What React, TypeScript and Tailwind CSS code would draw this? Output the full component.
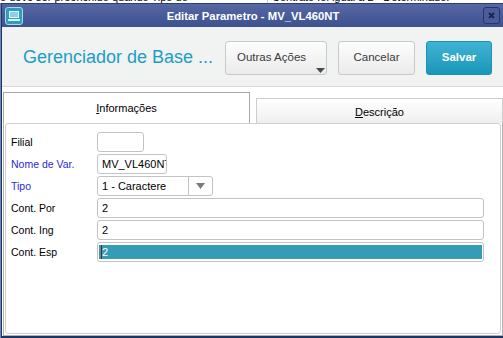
import React from "react";

function Row({ label, color, children }: { label: string; color?: string; children: React.ReactNode }) {
  return (
    <div className="flex items-center h-[20px]">
      <div className={`w-[86px] text-[10.5px] leading-[12px] ${color ?? "text-black"}`}>{label}</div>
      {children}
    </div>
  );
}

export default function App() {
  return (
    <div className="w-[503px] h-[338px] overflow-hidden bg-white flex flex-col font-['Liberation_Sans',Arial,sans-serif]">
      <div className="h-[3px] overflow-hidden flex text-[11px] leading-[11px] text-black shrink-0">
        <div className="-mt-[8px] w-[268px] whitespace-nowrap border-r border-[#c8c8c8]">o deve ser preenchido quando Tipo do</div>
        <div className="-mt-[8px] pl-[4px] whitespace-nowrap">Contrato foi igual a 2 - Determinado.</div>
      </div>
      <div className="flex-1 flex">
        <div className="w-[1px] bg-[#6b86b8]" />
        <div className="flex-1 flex flex-col border-l border-b-2 border-[#1c3564]">
          <div className="h-[24px] shrink-0 flex items-center bg-gradient-to-b from-[#5568a3] to-[#3e5190] border-t border-[#2c3e6e]">
            <div className="ml-[3px] w-[18px] h-[18px]">
              <svg width="18" height="18" viewBox="0 0 18 18">
                <rect x="0.5" y="0.5" width="17" height="17" rx="2.5" fill="#2f9dc0" stroke="#a9d8e6" />
                <rect x="4" y="4" width="10" height="7" fill="#e6f5fa" />
                <rect x="5" y="5" width="8" height="5" fill="#8fd0e4" />
                <rect x="3" y="12" width="12" height="2" fill="#e6f5fa" />
              </svg>
            </div>
            <div className="flex-1 text-center text-white font-bold text-[11.3px] leading-[14px]">Editar Parametro - MV_VL460NT</div>
            <div className="mr-[3px] w-[17px] h-[17px] rounded-[3px] border border-[#26366a] bg-[#4a5d9a] flex items-center justify-center">
              <svg width="7" height="7" viewBox="0 0 7 7">
                <path d="M1 1 L6 6 M6 1 L1 6" stroke="#1b2347" strokeWidth="1.8" />
              </svg>
            </div>
          </div>

          <div className="h-[60px] shrink-0 flex items-center bg-[#f1f2f2] border-b border-[#d8d8d8] pl-[21px] pr-[11px]">
            <div className="text-[18px] leading-[22px] text-[#1b9ec6] mt-[1px]">Gerenciador de Base ...</div>
            <div className="ml-auto flex gap-[11px] mt-[3px]">
              <div className="relative w-[102px] h-[34px] rounded-[3px] border border-[#c9c9c9] bg-gradient-to-b from-[#fdfdfd] to-[#ebebeb] flex items-center pl-[11px] text-[11.5px] text-[#3a3a3a]">
                Outras Ações
                <svg className="absolute left-[90px] top-[26px]" width="9" height="5" viewBox="0 0 9 5">
                  <path d="M0 0 L9 0 L4.5 5 Z" fill="#4a4a4a" />
                </svg>
              </div>
              <div className="w-[77px] h-[34px] rounded-[3px] border border-[#c9c9c9] bg-gradient-to-b from-[#fdfdfd] to-[#ebebeb] flex items-center justify-center text-[11.5px] text-[#3a3a3a]">
                Cancelar
              </div>
              <div className="w-[66px] h-[34px] rounded-[3px] border border-[#1b93b4] bg-gradient-to-b from-[#3fb3d2] to-[#1697ba] flex items-center justify-center text-[11.5px] font-bold text-white">
                Salvar
              </div>
            </div>
          </div>

          <div className="h-[5px] shrink-0" />

          <div className="h-[31px] shrink-0 flex items-end ml-[1px] w-[500px] gap-[6px]">
            <div className="w-[247px] h-[31px] border-t border-l border-r border-[#a8a8a8] bg-white flex items-center justify-center text-[11px] text-black">
              <span><span className="underline">I</span>nformações</span>
            </div>
            <div className="w-[247px] h-[25px] border-t border-l border-r border-[#cdcdcd] bg-gradient-to-b from-[#ffffff] to-[#efefef] flex items-center justify-center text-[11px] text-black pt-[2px]">
              <span><span className="underline">D</span>escrição</span>
            </div>
          </div>

          <div className="flex-1 ml-[1px] w-[500px] border-l border-r border-b border-[#b3b3b3] px-[1px] pb-[1px] flex">
            <div className="flex-1 border border-[#cfcfcf] rounded-[3px] pt-[8px] pl-[5px] flex flex-col gap-[2px]">
              <Row label="Filial">
                <div className="w-[47px] h-[20px] border border-[#c3c3c3] rounded-[3px] bg-white" />
              </Row>
              <Row label="Nome de Var." color="text-[#2a2ad8]">
                <div className="w-[70px] h-[20px] border border-[#c3c3c3] rounded-[3px] bg-white overflow-hidden whitespace-nowrap pl-[4px] text-[11px] leading-[18px] text-black">
                  MV_VL460NT
                </div>
              </Row>
              <Row label="Tipo" color="text-[#2a2ad8]">
                <div className="w-[116px] h-[20px] border border-[#c3c3c3] rounded-[3px] bg-white flex">
                  <div className="w-[91px] border-r border-[#c3c3c3] pl-[4px] text-[11px] leading-[18px] text-black whitespace-nowrap">1 - Caractere</div>
                  <div className="flex-1 flex items-center justify-center">
                    <svg width="9" height="6" viewBox="0 0 9 6">
                      <path d="M0 0 L9 0 L4.5 6 Z" fill="#7b7b7b" />
                    </svg>
                  </div>
                </div>
              </Row>
              <Row label="Cont. Por">
                <div className="w-[387px] h-[20px] border border-[#c3c3c3] rounded-[3px] bg-white pl-[4px] text-[11px] leading-[18px] text-black">2</div>
              </Row>
              <Row label="Cont. Ing">
                <div className="w-[387px] h-[20px] border border-[#c3c3c3] rounded-[3px] bg-white pl-[4px] text-[11px] leading-[18px] text-black">2</div>
              </Row>
              <Row label="Cont. Esp">
                <div className="w-[387px] h-[20px] border border-[#c3c3c3] rounded-[3px] bg-white pt-[2px] pb-[2px] pl-[1px] pr-[1px] flex">
                  <div className="flex-1 bg-[#369cb5] flex items-center pl-[2px] text-[11px] leading-[14px] text-white">
                    <span className="border-l border-[#7a1a1a]">2</span>
                  </div>
                </div>
              </Row>
            </div>
          </div>
        </div>
      </div>
    </div>
  );
}
